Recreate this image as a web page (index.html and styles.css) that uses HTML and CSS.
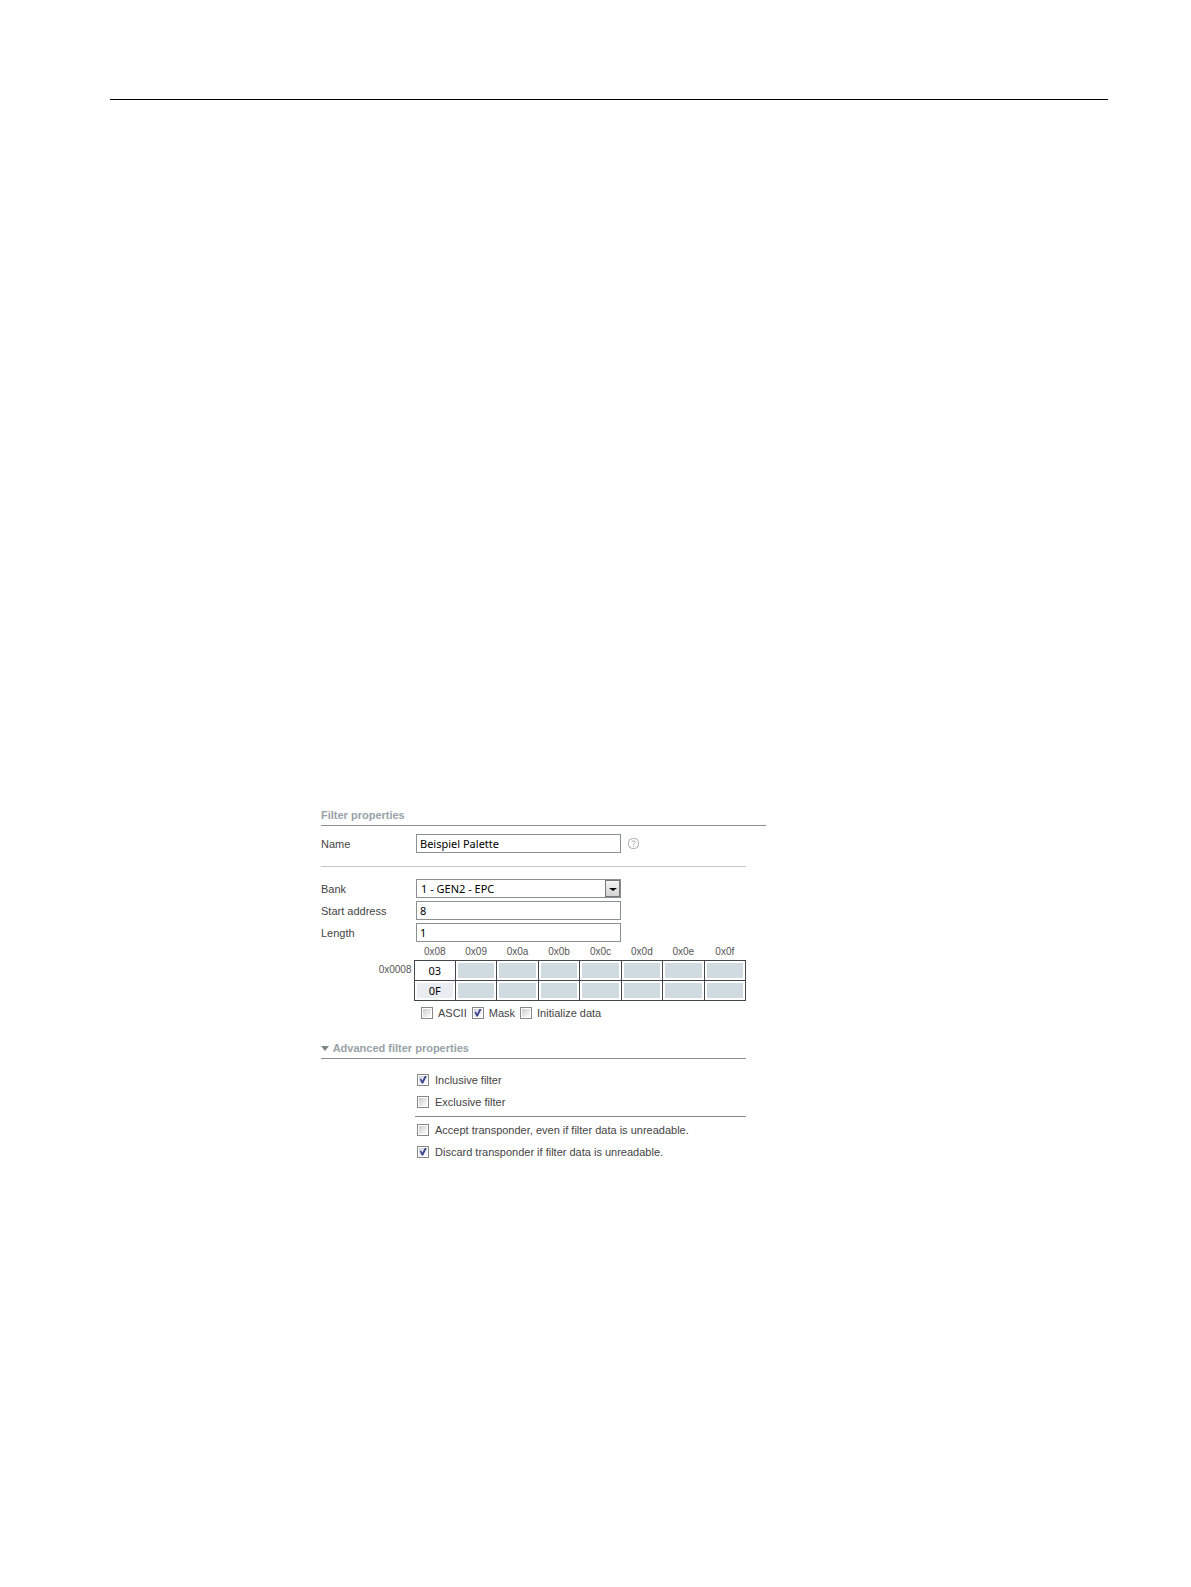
FILE: index.html
```
<!DOCTYPE html>
<html lang="en">
<head>
    <meta charset="UTF-8">
    <meta name="viewport" content="width=device-width, initial-scale=1.0">
    <title>Filter properties</title>
    <link rel="stylesheet" href="styles.css">
</head>
<body>
    <hr class="page-rule">
    <form class="filter-form">
        <h2 class="section-title">Filter properties</h2>
        <div class="panel">
            <div class="row">
                <label for="name">Name</label>
                <input class="field" type="text" id="name" value="Beispiel Palette">
                <button class="help" type="button" aria-label="Help">
                    <svg width="12" height="12" viewBox="0 0 12 12" fill="none" stroke="#aaa">
                        <rect x="0.5" y="0.5" width="10" height="10" rx="4"/>
                        <path d="M3.8 4.2 Q3.8 2.8 5.5 2.8 Q7.2 2.8 7.2 4.2 Q7.2 5 5.5 6 V7 M5.5 8 V9"/>
                    </svg>
                </button>
            </div>
            <hr class="divider">
            <div class="row">
                <label for="bank">Bank</label>
                <div class="select-box">
                    <select class="field" id="bank">
                        <option>1 - GEN2 - EPC</option>
                    </select>
                    <span class="arrow"></span>
                </div>
            </div>
            <div class="row">
                <label for="start">Start address</label>
                <input class="field" type="text" id="start" value="8">
            </div>
            <div class="row">
                <label for="length">Length</label>
                <input class="field" type="text" id="length" value="1">
            </div>
            <table class="memory">
                <thead>
                    <tr>
                        <td class="corner"></td>
                        <th>0x08</th>
                        <th>0x09</th>
                        <th>0x0a</th>
                        <th>0x0b</th>
                        <th>0x0c</th>
                        <th>0x0d</th>
                        <th>0x0e</th>
                        <th>0x0f</th>
                    </tr>
                </thead>
                <tbody>
                    <tr>
                        <th>0x0008</th>
                        <td><input type="text" value="03" aria-label="Data 0x08"></td>
                        <td><input type="text" disabled aria-label="Data 0x09"></td>
                        <td><input type="text" disabled aria-label="Data 0x0a"></td>
                        <td><input type="text" disabled aria-label="Data 0x0b"></td>
                        <td><input type="text" disabled aria-label="Data 0x0c"></td>
                        <td><input type="text" disabled aria-label="Data 0x0d"></td>
                        <td><input type="text" disabled aria-label="Data 0x0e"></td>
                        <td><input type="text" disabled aria-label="Data 0x0f"></td>
                    </tr>
                    <tr>
                        <th></th>
                        <td><input class="mask" type="text" value="0F" aria-label="Mask 0x08"></td>
                        <td><input type="text" disabled aria-label="Mask 0x09"></td>
                        <td><input type="text" disabled aria-label="Mask 0x0a"></td>
                        <td><input type="text" disabled aria-label="Mask 0x0b"></td>
                        <td><input type="text" disabled aria-label="Mask 0x0c"></td>
                        <td><input type="text" disabled aria-label="Mask 0x0d"></td>
                        <td><input type="text" disabled aria-label="Mask 0x0e"></td>
                        <td><input type="text" disabled aria-label="Mask 0x0f"></td>
                    </tr>
                </tbody>
            </table>
            <div class="view-options">
                <label><input type="checkbox">ASCII</label>
                <label><input type="checkbox" checked>Mask</label>
                <label><input type="checkbox">Initialize data</label>
            </div>
            <h2 class="section-title advanced">
                <svg width="8" height="5" viewBox="0 0 8 5"><path d="M0 0 H8 L4 5 Z" fill="#7d8488"/></svg>
                Advanced filter properties
            </h2>
            <div class="advanced-options">
                <div class="option-group">
                    <label><input type="checkbox" checked>Inclusive filter</label>
                    <label><input type="checkbox">Exclusive filter</label>
                </div>
                <div class="option-group">
                    <label><input type="checkbox">Accept transponder, even if filter data is unreadable.</label>
                    <label><input type="checkbox" checked>Discard transponder if filter data is unreadable.</label>
                </div>
            </div>
        </div>
    </form>
</body>
</html>
```
FILE: styles.css
```
* {
    box-sizing: border-box;
}
body {
    margin: 0;
    padding: 99px 83px 40px 110px;
    background-color: #fff;
    color: #444;
    font-family: Arial, "Liberation Sans", sans-serif;
    font-size: 11px;
    line-height: 14px;
}
.page-rule {
    height: 1px;
    margin: 0;
    border: 0;
    background-color: #000;
}
.filter-form {
    max-width: 445px;
    margin: 708px 0 0 211px;
}
.section-title {
    margin: 0;
    height: 18px;
    border-bottom: 1px solid #899195;
    color: #98a3a7;
    font-size: 11px;
    line-height: 14px;
}
.panel {
    max-width: 425px;
    padding-top: 8px;
}
.row {
    display: flex;
    align-items: center;
    height: 19px;
    margin-bottom: 3px;
}
.row label {
    width: 95px;
    font-size: 11px;
}
.field {
    width: 205px;
    height: 19px;
    margin: 0;
    padding: 0 3px;
    border: 1px solid #8c9093;
    border-radius: 0;
    background-color: #fff;
    color: #000;
    font-family: Tahoma, "Noto Sans", sans-serif;
    font-size: 11px;
}
.help {
    display: flex;
    margin-left: 7px;
    padding: 0;
    border: 0;
    background: none;
}
.divider {
    height: 1px;
    margin: 13px 0 12px;
    border: 0;
    background-color: #c4c8c9;
}
.select-box {
    position: relative;
    display: flex;
}
.select-box select {
    appearance: none;
    padding-left: 4px;
}
.arrow {
    position: absolute;
    top: 1px;
    right: 1px;
    width: 15px;
    height: 17px;
    border: 1px solid #777;
    background: linear-gradient(#f4f4f4, #d4d4d4);
    pointer-events: none;
}
.arrow::after {
    content: "";
    position: absolute;
    top: 7px;
    left: 3px;
    border: 4px solid transparent;
    border-top: 3px solid #000;
    border-bottom: 0;
}

/* memory bytes */
.memory {
    width: 425px;
    margin-top: -3px;
    border-collapse: collapse;
    table-layout: fixed;
}
.memory th {
    padding: 0;
    color: #555;
    font-size: 10px;
    font-weight: normal;
}
.memory thead th {
    height: 18px;
    padding-top: 3px;
}
.memory .corner {
    width: 93px;
}
.memory tbody th {
    padding-right: 2px;
    text-align: right;
}
.memory tbody td {
    height: 20px;
    padding: 2px;
    border: 1px solid #42464d;
}
.memory input {
    display: block;
    width: 100%;
    height: 15px;
    padding: 0;
    border: 0;
    background-color: #fff;
    color: #000;
    font-family: Tahoma, "Noto Sans", sans-serif;
    font-size: 11px;
    text-align: center;
}
.memory input.mask {
    background-color: #e9edf2;
}
.memory input:disabled {
    background-color: #d0dae1;
}

.view-options {
    display: flex;
    gap: 5px;
    padding: 5px 0 0 100px;
}
.view-options label,
.option-group label {
    display: flex;
    align-items: center;
    gap: 5px;
}
input[type="checkbox"] {
    appearance: none;
    width: 12px;
    height: 12px;
    margin: 0;
    border: 1px solid #888;
    background: linear-gradient(135deg, #ccc, #fff) content-box;
    padding: 1px;
}
input[type="checkbox"]:checked {
    background: linear-gradient(135deg, #ccd0e4, #fff) content-box;
}
input[type="checkbox"]:checked::after {
    content: "";
    display: block;
    width: 8px;
    height: 8px;
    background-color: #3c4488;
    clip-path: polygon(8% 45%, 28% 40%, 42% 65%, 75% 0, 100% 0, 52% 100%, 35% 100%);
}

.advanced {
    margin-top: 21px;
}
.advanced svg {
    margin: 0 1px 1px 0;
}
.advanced-options {
    margin-left: 94px;
    padding-top: 10px;
}
.option-group label {
    height: 22px;
    padding-left: 2px;
    gap: 6px;
}
.option-group + .option-group {
    margin-top: 3px;
    padding-top: 2px;
    border-top: 1px solid #85888b;
}
```
